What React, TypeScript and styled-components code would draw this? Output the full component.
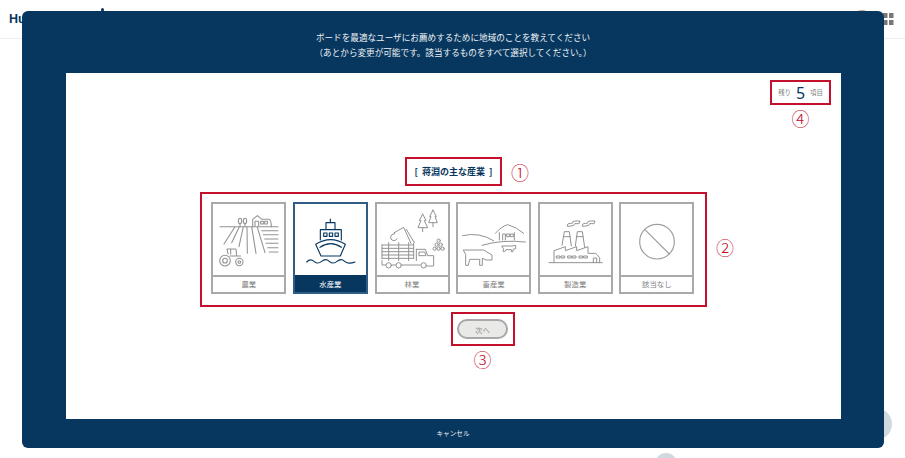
import React from "react";
import styled, { createGlobalStyle } from "styled-components";

const Global = createGlobalStyle`
  html, body { margin: 0; padding: 0; height: 458px; overflow: hidden; background: #fff; }
  body { font-family: "Noto Sans CJK JP", "Noto Sans", sans-serif; }
`;

const NAVY = "#07375f";
const RED = "#c40f2d";
const GREY = "#a9a9a9";
const LINE = "#929292";

const Header = styled.header`
  height: 38px;
  border-bottom: 1px solid #eeeeee;
  display: flex;
  align-items: center;
  padding: 0 11px 0 9px;
`;
const Brand = styled.div`
  font: bold 12.5px "Liberation Sans", sans-serif;
  color: ${NAVY};
`;
const BrandDot = styled.span`
  align-self: flex-start;
  width: 3px;
  height: 4px;
  margin: 8px 0 0 75px;
  border-radius: 50%;
  background: ${NAVY};
`;
const Spacer = styled.div`
  flex: 1;
`;
const GridIcon = styled.svg`
  display: block;
  width: 11px;
  height: 12px;
  margin-top: -1px;
`;
const Fab = styled.div<{ $x: number; $y: number; $r: number; $color?: string }>`
  position: fixed;
  left: ${(p) => p.$x - p.$r}px;
  top: ${(p) => p.$y - p.$r}px;
  width: ${(p) => p.$r * 2}px;
  height: ${(p) => p.$r * 2}px;
  border-radius: 50%;
  background: ${(p) => p.$color ?? "#cfd9e0"};
`;
const Modal = styled.div`
  position: fixed;
  left: 22px;
  top: 11px;
  width: 862px;
  height: 437px;
  background: ${NAVY};
  border-radius: 6px;
  display: flex;
  flex-direction: column;
  align-items: stretch;
`;
const Intro = styled.div`
  height: 62px;
  box-sizing: border-box;
  padding-top: 19px;
  text-align: center;
  color: #eef2f6;
  font-size: 8.6px;
  line-height: 15px;
`;
const Panel = styled.main`
  flex: 1;
  margin: 0 43px 0 44px;
  background: #fff;
  display: flex;
  flex-direction: column;
  align-items: center;
`;
const TimerRow = styled.div`
  align-self: flex-end;
  margin: 7px 10px 0 0;
  display: flex;
  flex-direction: column;
  align-items: center;
`;
const TimerBox = styled.div`
  box-sizing: border-box;
  width: 61px;
  height: 25px;
  border: 2px solid ${RED};
  display: flex;
  align-items: center;
  justify-content: center;
  gap: 5px;
  color: #808080;
  font-size: 6.4px;
`;
const TimerValue = styled.span`
  font: 16px "Noto Sans", sans-serif;
  color: ${NAVY};
  line-height: 20px;
`;
const Mark = styled.span`
  display: block;
  color: ${RED};
  font: 300 18px/20px "Noto Sans CJK JP", sans-serif;
`;
const TimerMark = styled(Mark)`
  margin-top: 3px;
`;
const Annotated = styled.div`
  position: relative;
`;
const TitleRow = styled(Annotated)`
  margin-top: 29px;
`;
const SideMark = styled(Mark)<{ $right: number }>`
  position: absolute;
  top: 50%;
  right: ${(p) => p.$right}px;
  transform: translateY(-50%);
`;
const TitleBox = styled.h2`
  box-sizing: border-box;
  margin: 0;
  width: 97px;
  height: 29px;
  border: 2px solid ${RED};
  display: flex;
  align-items: center;
  justify-content: center;
  color: ${NAVY};
  font-size: 9px;
  font-weight: 700;
  word-spacing: 2px;
  white-space: pre;
`;
const OptionsBox = styled.div`
  box-sizing: border-box;
  margin-top: 6px;
  width: 507px;
  height: 115px;
  border: 2px solid ${RED};
  display: flex;
  justify-content: center;
  align-items: flex-start;
  gap: 6.6px;
  padding: 8px 1.4px 0 0;
`;
const Option = styled.div<{ $active?: boolean }>`
  box-sizing: border-box;
  width: 75px;
  height: 92px;
  border: 2px solid ${(p) => (p.$active ? "#2f5d85" : GREY)};
  display: flex;
  flex-direction: column;
`;
const OptionArt = styled.svg`
  display: block;
  width: 71px;
  height: 71px;
  fill: none;
  stroke-linecap: round;
  stroke-linejoin: round;
`;
const OptionLabel = styled.div<{ $active?: boolean }>`
  flex: 1;
  display: flex;
  align-items: center;
  justify-content: center;
  padding-bottom: 2px;
  font-size: 7.4px;
  color: ${(p) => (p.$active ? "#fff" : "#808080")};
  background: ${(p) => (p.$active ? NAVY : "#fff")};
  border-top: 2px solid ${(p) => (p.$active ? NAVY : GREY)};
`;
const NextGroup = styled.div`
  margin: 5px 0 0 58px;
  display: flex;
  flex-direction: column;
  align-items: center;
`;
const NextBox = styled.div`
  box-sizing: border-box;
  width: 64px;
  height: 34px;
  border: 2px solid ${RED};
  display: flex;
  align-items: center;
  justify-content: center;
`;
const NextButton = styled.button`
  box-sizing: border-box;
  width: 51px;
  height: 20px;
  border: 2px solid #a8a8a8;
  border-radius: 10px;
  background: #e9e9e7;
  color: #8a8a8a;
  padding: 0;
  font: 7.4px "Noto Sans CJK JP", sans-serif;
`;
const NextMark = styled(Mark)`
  margin-top: 3px;
`;
const Footer = styled.div`
  height: 29px;
  padding-bottom: 2px;
  box-sizing: border-box;
  display: flex;
  align-items: center;
  justify-content: center;
  color: #eef2f6;
  font-size: 6.6px;
`;

const Farm = () => (
  <OptionArt viewBox="39 42 213 213" stroke={LINE} strokeWidth="3.2">
    <path d="M60 110H234M105 110L72 162M118 110L95 158M130 110L117 170M141 110L142 190M155 110L168 190M172 112L195 188M185 122H234M190 134H234M194 147H234M198 160H234M203 173H234M208 186H234" />
    <ellipse cx="120" cy="93" rx="5" ry="8" />
    <ellipse cx="135" cy="93" rx="5" ry="8" />
    <path d="M120 101V110M135 101V110M158 110V88L172 77L186 88H208Q214 92 214 110M165 108V94H176V108M182 94H190V102H182ZM194 94H202V102H194Z" />
    <circle cx="75" cy="212" r="16" />
    <circle cx="75" cy="212" r="7" />
    <circle cx="118" cy="216" r="11" />
    <circle cx="118" cy="216" r="4" />
    <path d="M84 192L81 177H108L110 198M92 177V192M90 198H122" />
  </OptionArt>
);
const Ship = () => (
  <OptionArt viewBox="285 42 213 213" stroke={NAVY} strokeWidth="3.4">
    <path d="M391 87V98M378 118V98H405V118M361 150V119H424V150" />
    <path d="M371 129H381V139H371ZM388 129H398V139H388ZM405 129H415V139H405Z" />
    <path d="M347 163Q392 135 436 163L421 198H363Z" />
    <path d="M360 172Q392 150 424 172" />
    <path d="M320 216Q331 204 342 214T365 214T388 214T411 214T434 214T465 216" />
  </OptionArt>
);
const Forest = () => (
  <OptionArt viewBox="20 42 213 213" stroke={LINE} strokeWidth="3">
    <path d="M157 72L147 92H152L143 113H157V125M157 72L167 92H162L172 113H157" />
    <path d="M188 60L178 80H182L175 98H188V110M188 60L198 80H194L201 98H188" />
    <path d="M35 165H130M35 175H130M35 185H130M35 195H130M35 205H130M35 165V205M55 158V212M85 158V212M115 158V212M130 160V205" />
    <path d="M122 160L100 112L72 128M132 158L108 118M72 128V132A10 10 0 1 0 80 146" />
    <path d="M138 178H165L172 197H190V228H170M138 178V212M147 186H163L167 197H147ZM35 212V225H46M64 225H76M94 225H150" />
    <circle cx="55" cy="226" r="8" />
    <circle cx="85" cy="226" r="8" />
    <circle cx="160" cy="226" r="8" />
    <circle cx="205" cy="152" r="5" />
    <circle cx="199" cy="164" r="5" />
    <circle cx="211" cy="164" r="5" />
    <circle cx="193" cy="176" r="5" />
    <circle cx="205" cy="176" r="5" />
    <circle cx="217" cy="176" r="5" />
  </OptionArt>
);
const Livestock = () => (
  <OptionArt viewBox="263 42 213 213" stroke={LINE} strokeWidth="3">
    <path d="M277 137Q325 125 370 152M335 166Q395 148 465 156" />
    <path d="M375 130Q395 108 412 104Q440 112 460 130M387 150V128M432 150V128" />
    <path d="M397 150V132H405V150M410 132H418V140H410ZM421 132H429V140H421Z" />
    <path d="M280 180H340L365 195V210H348L336 205V226H328V208H298L294 226H286V195Z" />
    <path d="M395 168H425L436 166V176L428 178V185H423V179H407L403 185H399V176Z" />
  </OptionArt>
);
const Factory = () => (
  <OptionArt viewBox="28 42 213 213" stroke={LINE} strokeWidth="3">
    <path d="M55 218H215M70 218V182L104 170V182L138 170V182L172 170V190H195L207 203V218" />
    <path d="M94 166L101 125H116L122 168M134 168L140 125H155L162 172M99 140H118M138 140H157" />
    <path d="M78 198H88V204H78ZM92 198H102V204H92ZM112 198H122V204H112ZM126 198H136V204H126ZM146 198H156V204H146ZM160 198H170V204H160ZM188 218V204H198V218" />
    <path d="M110 108Q108 100 120 100H125Q125 92 135 93H148L145 101H132Q132 108 122 108ZM155 108Q153 100 165 100H170Q170 92 180 93H193L190 101H177Q177 108 167 108Z" />
  </OptionArt>
);
const NoneArt = () => (
  <OptionArt viewBox="272 42 213 213" stroke="#a0a0a0" strokeWidth="3.6">
    <circle cx="380" cy="155" r="52" />
    <path d="M343 118L417 192" />
  </OptionArt>
);

const options = [
  { label: "農業", Art: Farm },
  { label: "水産業", Art: Ship, active: true },
  { label: "林業", Art: Forest },
  { label: "畜産業", Art: Livestock },
  { label: "製造業", Art: Factory },
  { label: "該当なし", Art: NoneArt },
];

export default function App() {
  return (
    <>
      <Global />
      <Header>
        <Brand>Hu</Brand>
        <BrandDot />
        <Spacer />
        <GridIcon viewBox="0 0 11 12" fill="#777">
          <rect x="0" y="0" width="4.5" height="5" />
          <rect x="6" y="0" width="4.5" height="5" />
          <rect x="0" y="7" width="4.5" height="5" />
          <rect x="6" y="7" width="4.5" height="5" />
        </GridIcon>
      </Header>
      <Fab $x={862} $y={22} $r={12} $color="#c9a58f" />
      <Fab $x={876} $y={424} $r={16} />
      <Fab $x={666} $y={464} $r={11} />
      <Modal>
        <Intro>
          ボードを最適なユーザにお薦めするために地域のことを教えてください
          <br />
          （あとから変更が可能です。該当するものをすべて選択してください。）
        </Intro>
        <Panel>
          <TimerRow>
            <TimerBox>
              <span>残り</span>
              <TimerValue>5</TimerValue>
              <span>項目</span>
            </TimerBox>
            <TimerMark>④</TimerMark>
          </TimerRow>
          <TitleRow>
            <TitleBox>{"[ 蒋淵の主な産業 ]"}</TitleBox>
            <SideMark $right={-27}>①</SideMark>
          </TitleRow>
          <Annotated>
            <OptionsBox>
              {options.map(({ label, Art, active }) => (
                <Option key={label} $active={active}>
                  <Art />
                  <OptionLabel $active={active}>{label}</OptionLabel>
                </Option>
              ))}
            </OptionsBox>
            <SideMark $right={-27}>②</SideMark>
          </Annotated>
          <NextGroup>
            <NextBox>
              <NextButton>次へ</NextButton>
            </NextBox>
            <NextMark>③</NextMark>
          </NextGroup>
        </Panel>
        <Footer>キャンセル</Footer>
      </Modal>
    </>
  );
}
